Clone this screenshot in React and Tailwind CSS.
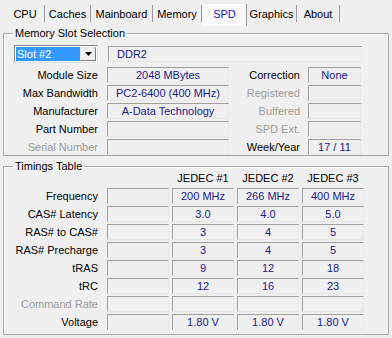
const tabs = [
  { name: "CPU", w: 39 },
  { name: "Caches", w: 46 },
  { name: "Mainboard", w: 62 },
  { name: "Memory", w: 49 },
  { name: "SPD", w: 45, active: true },
  { name: "Graphics", w: 50 },
  { name: "About", w: 43 },
];

const slotRows = [
  { label: "Module Size", value: "2048 MBytes", rLabel: "Correction", rValue: "None" },
  { label: "Max Bandwidth", value: "PC2-6400 (400 MHz)", rLabel: "Registered", rDim: true },
  { label: "Manufacturer", value: "A-Data Technology", rLabel: "Buffered", rDim: true },
  { label: "Part Number", value: "", rLabel: "SPD Ext.", rDim: true },
  { label: "Serial Number", value: "", dim: true, rLabel: "Week/Year", rValue: "17 / 11" },
];

const timingRows = [
  { label: "Frequency", vals: ["200 MHz", "266 MHz", "400 MHz"] },
  { label: "CAS# Latency", vals: ["3.0", "4.0", "5.0"] },
  { label: "RAS# to CAS#", vals: ["3", "4", "5"] },
  { label: "RAS# Precharge", vals: ["3", "4", "5"] },
  { label: "tRAS", vals: ["9", "12", "18"] },
  { label: "tRC", vals: ["12", "16", "23"] },
  { label: "Command Rate", vals: ["", "", ""], dim: true },
  { label: "Voltage", vals: ["1.80 V", "1.80 V", "1.80 V"] },
];

function Field({ className = "", children }) {
  return (
    <div
      className={
        "h-[16px] flex items-center justify-center border border-[#a0a0a0] border-r-[#e8e8e8] border-b-[#e8e8e8] text-[#20208a] leading-none whitespace-nowrap overflow-hidden " +
        className
      }
    >
      {children}
    </div>
  );
}

function Label({ className = "", dim, children }) {
  return (
    <div className={"text-right whitespace-nowrap leading-none " + (dim ? "text-[#9d9d9d] " : "text-black ") + className}>
      {children}
    </div>
  );
}

export default function App() {
  return (
    <div
      className="w-[392px] h-[338px] bg-[#f0f0f0] overflow-hidden text-[11px] text-black"
      style={{ fontFamily: '"Liberation Sans", Arial, sans-serif' }}
    >
      {/* Tabs */}
      <div className="h-[25px] flex items-end pl-[6px]">
        {tabs.map((t) =>
          t.active ? (
            <div
              key={t.name}
              style={{ width: t.w }}
              className="h-[22px] mb-[-1px] flex items-center justify-center bg-[#fafafa] border-l border-l-white border-r border-r-[#9a9a9a] text-[#1515d0]"
            >
              <span className="mt-[-2px]">{t.name}</span>
            </div>
          ) : (
            <div
              key={t.name}
              style={{ width: t.w }}
              className="h-[17px] mb-[3px] flex items-center justify-center border-r border-r-[#9a9a9a]"
            >
              <span className="mt-[1px]">{t.name}</span>
            </div>
          )
        )}
      </div>

      <div className="px-[3px]">
        {/* Memory Slot Selection */}
        <fieldset className="mt-[2px] h-[129px] border border-[#a5a5a5] shadow-[inset_1px_1px_0_#ffffff]">
          <legend className="ml-[9px] px-[2px] leading-[13px]">Memory Slot Selection</legend>
          <div className="flex items-center mt-[5px]">
            <div className="ml-[10px] w-[84px] h-[18px] flex border border-[#8a8a8a] border-r-[#e0e0e0] border-b-[#e0e0e0] bg-white p-[1px]">
              <div className="flex-1 bg-[#3399ff] text-white flex items-center pl-[1px] leading-none">Slot #2</div>
              <div className="w-[16px] bg-[#f0f0f0] border border-[#e8e8e8] border-r-[#7a7a7a] border-b-[#7a7a7a] flex items-center justify-center">
                <svg width="7" height="4" viewBox="0 0 7 4">
                  <path d="M0 0h7L3.5 4z" fill="#000" />
                </svg>
              </div>
            </div>
            <Field className="ml-[10px] w-[254px] justify-start pl-[8px]">DDR2</Field>
          </div>
          <div className="flex flex-col gap-[2px] mt-[4px]">
            {slotRows.map((r) => (
              <div key={r.label} className="flex items-center">
                <Label dim={r.dim} className="w-[94px]">{r.label}</Label>
                <Field className="ml-[9px] w-[122px]">{r.value}</Field>
                <Label dim={r.rDim} className="w-[71px]">{r.rLabel}</Label>
                <Field className="ml-[8px] w-[53px]">{r.rValue}</Field>
              </div>
            ))}
          </div>
        </fieldset>

        {/* Timings Table */}
        <fieldset className="mt-[4px] h-[175px] border border-[#a5a5a5] shadow-[inset_1px_1px_0_#ffffff]">
          <legend className="ml-[9px] px-[2px] leading-[13px]">Timings Table</legend>
          <div className="flex mt-[-1px] h-[13px] items-center">
            <div className="w-[165px]" />
            {["JEDEC #1", "JEDEC #2", "JEDEC #3"].map((h) => (
              <div key={h} className="w-[62px] ml-[3px] text-center leading-none">{h}</div>
            ))}
          </div>
          <div className="flex flex-col gap-[2px] mt-[3px]">
            {timingRows.map((r) => (
              <div key={r.label} className="flex items-center">
                <Label dim={r.dim} className="w-[94px]">{r.label}</Label>
                <Field className="ml-[9px] w-[62px]" />
                {r.vals.map((v, i) => (
                  <Field key={i} className="ml-[3px] w-[62px]">{v}</Field>
                ))}
              </div>
            ))}
          </div>
        </fieldset>
      </div>
    </div>
  );
}
